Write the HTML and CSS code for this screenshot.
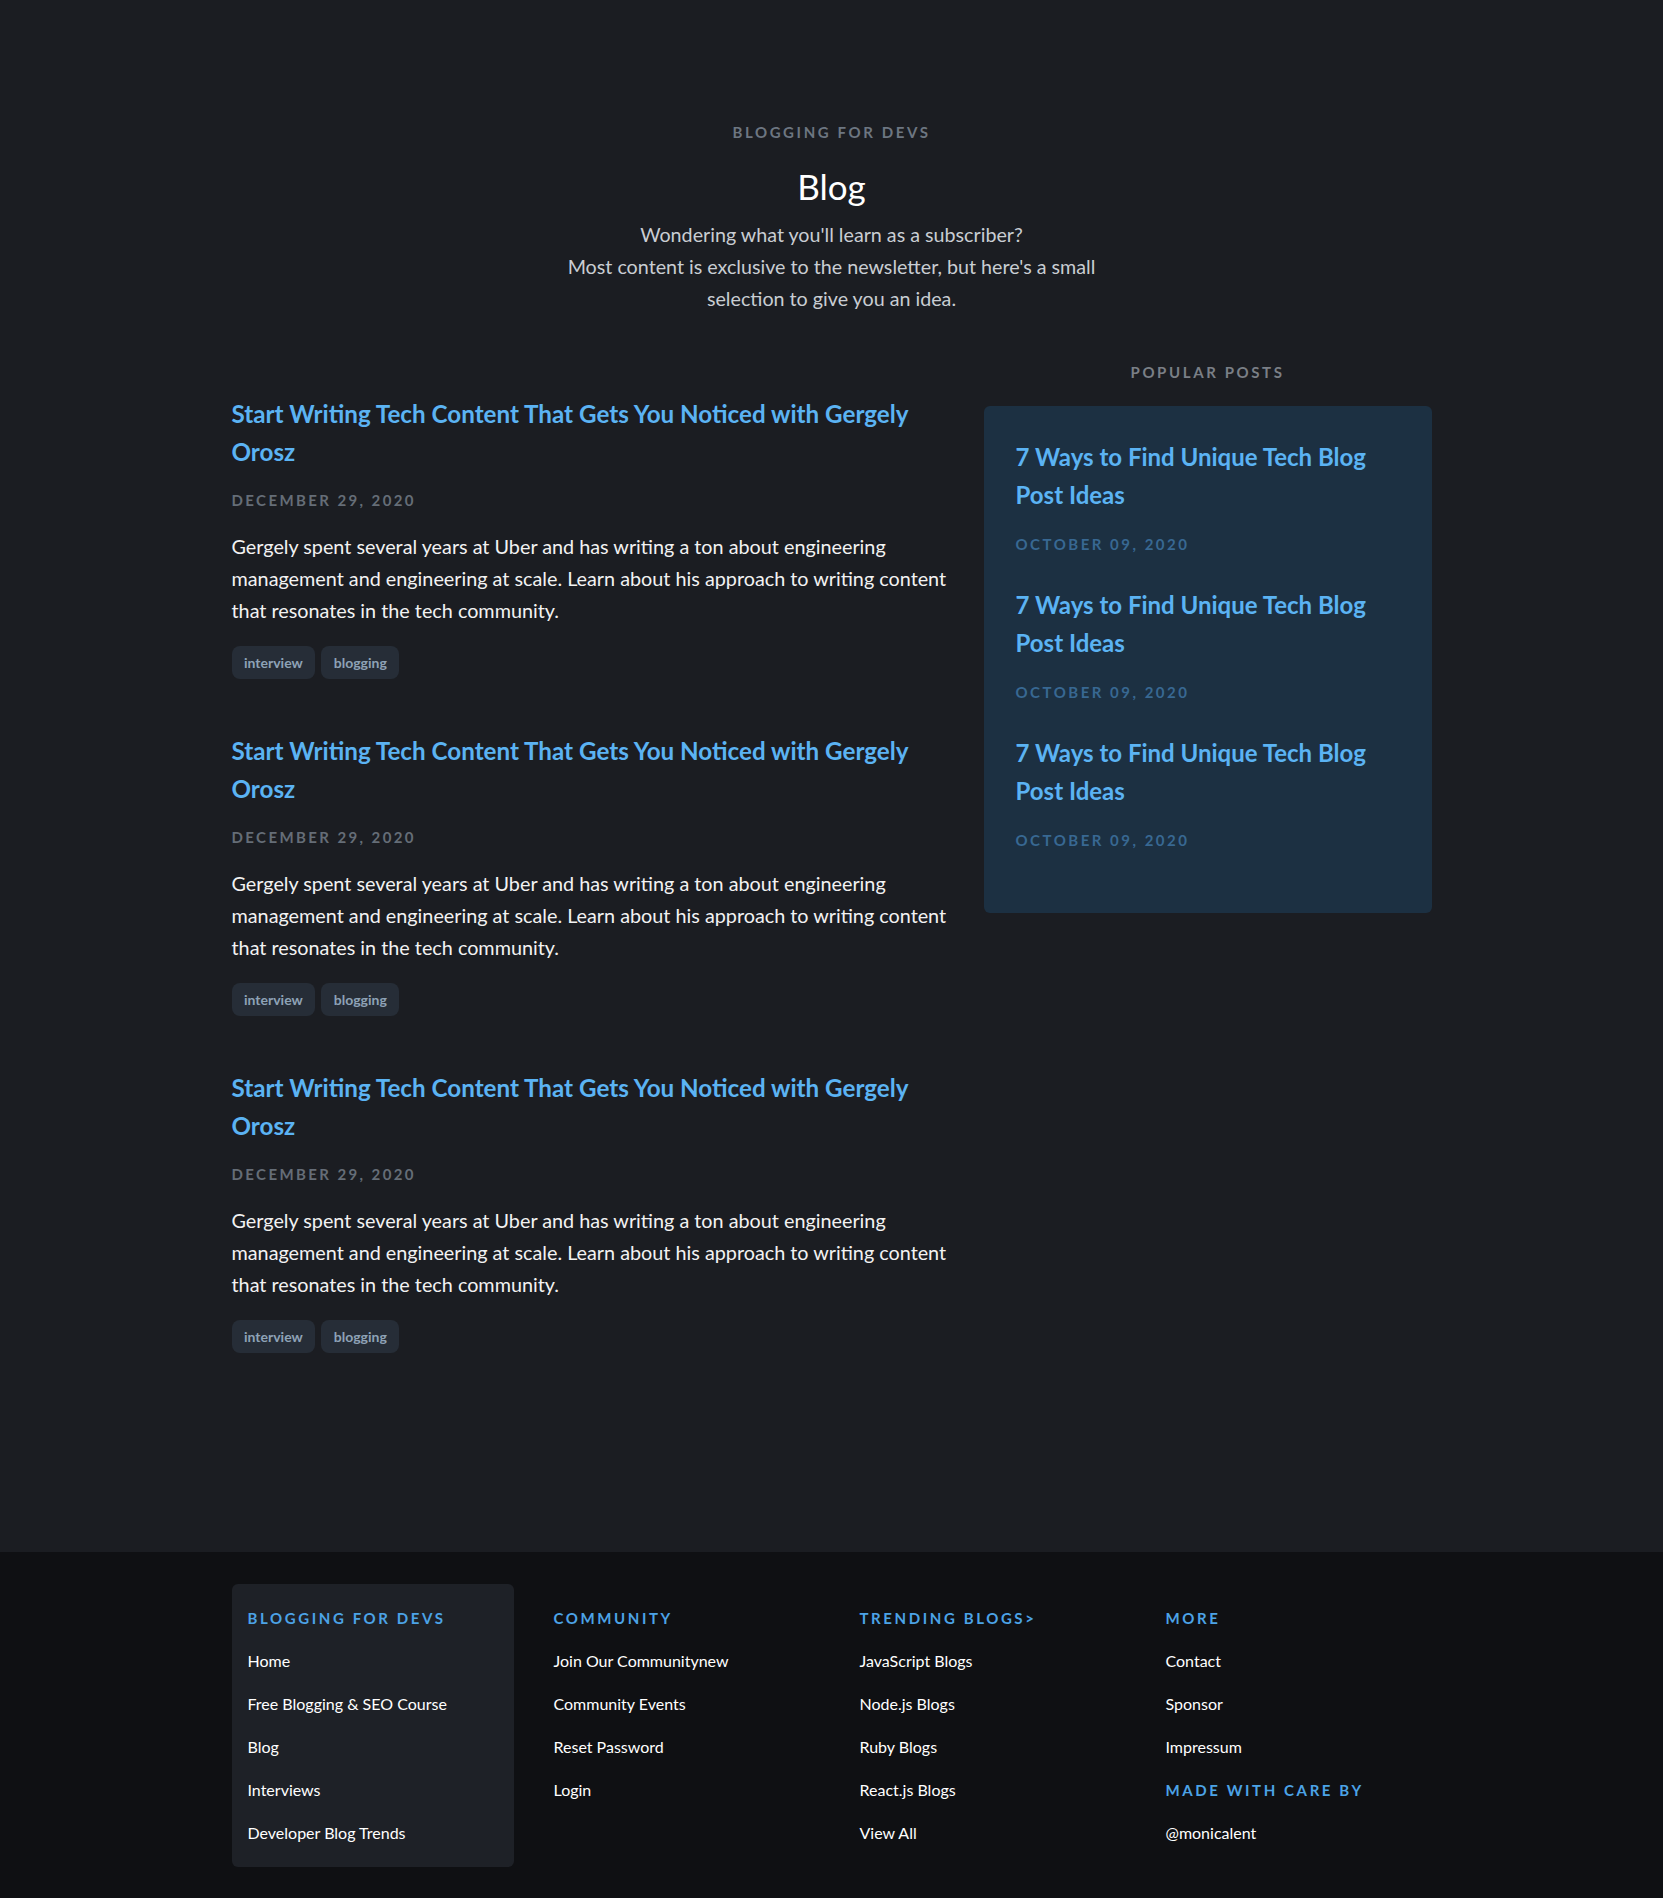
FILE: index.html
```html
<!DOCTYPE html>
<html lang="en">
<head>
<meta charset="utf-8">
<title>Blog | Blogging for Devs</title>
<link rel="stylesheet" href="styles.css">
</head>
<body>
<header class="hero">
  <div class="eyebrow">Blogging for Devs</div>
  <h1 class="hero-title">Blog</h1>
  <p class="hero-text">Wondering what you'll learn as a subscriber?<br>Most content is exclusive to the newsletter, but here's a small selection to give you an idea.</p>
</header>

<main class="layout">
  <section class="posts">
    <article class="post">
      <h2 class="post-title"><a href="#">Start Writing Tech Content That Gets You Noticed with Gergely Orosz</a></h2>
      <div class="post-date">December 29, 2020</div>
      <p class="post-excerpt">Gergely spent several years at Uber and has writing a ton about engineering management and engineering at scale. Learn about his approach to writing content that resonates in the tech community.</p>
      <div class="tags"><span class="tag">interview</span><span class="tag">blogging</span></div>
    </article>
    <article class="post">
      <h2 class="post-title"><a href="#">Start Writing Tech Content That Gets You Noticed with Gergely Orosz</a></h2>
      <div class="post-date">December 29, 2020</div>
      <p class="post-excerpt">Gergely spent several years at Uber and has writing a ton about engineering management and engineering at scale. Learn about his approach to writing content that resonates in the tech community.</p>
      <div class="tags"><span class="tag">interview</span><span class="tag">blogging</span></div>
    </article>
    <article class="post">
      <h2 class="post-title"><a href="#">Start Writing Tech Content That Gets You Noticed with Gergely Orosz</a></h2>
      <div class="post-date">December 29, 2020</div>
      <p class="post-excerpt">Gergely spent several years at Uber and has writing a ton about engineering management and engineering at scale. Learn about his approach to writing content that resonates in the tech community.</p>
      <div class="tags"><span class="tag">interview</span><span class="tag">blogging</span></div>
    </article>
  </section>

  <aside class="sidebar">
    <div class="sidebar-heading">Popular Posts</div>
    <div class="popular-card">
      <div class="popular-item">
        <a class="popular-title" href="#">7 Ways to Find Unique Tech Blog Post Ideas</a>
        <div class="popular-date">October 09, 2020</div>
      </div>
      <div class="popular-item">
        <a class="popular-title" href="#">7 Ways to Find Unique Tech Blog Post Ideas</a>
        <div class="popular-date">October 09, 2020</div>
      </div>
      <div class="popular-item">
        <a class="popular-title" href="#">7 Ways to Find Unique Tech Blog Post Ideas</a>
        <div class="popular-date">October 09, 2020</div>
      </div>
    </div>
  </aside>
</main>

<footer class="footer">
  <div class="footer-inner">
    <div class="footer-col footer-col-boxed">
      <div class="footer-heading">Blogging for Devs</div>
      <a class="footer-link" href="#">Home</a>
      <a class="footer-link" href="#">Free Blogging &amp; SEO Course</a>
      <a class="footer-link" href="#">Blog</a>
      <a class="footer-link" href="#">Interviews</a>
      <a class="footer-link" href="#">Developer Blog Trends</a>
    </div>
    <div class="footer-col">
      <div class="footer-heading">Community</div>
      <a class="footer-link" href="#">Join Our Communitynew</a>
      <a class="footer-link" href="#">Community Events</a>
      <a class="footer-link" href="#">Reset Password</a>
      <a class="footer-link" href="#">Login</a>
    </div>
    <div class="footer-col">
      <div class="footer-heading">Trending Blogs&gt;</div>
      <a class="footer-link" href="#">JavaScript Blogs</a>
      <a class="footer-link" href="#">Node.js Blogs</a>
      <a class="footer-link" href="#">Ruby Blogs</a>
      <a class="footer-link" href="#">React.js Blogs</a>
      <a class="footer-link" href="#">View All</a>
    </div>
    <div class="footer-col">
      <div class="footer-heading">More</div>
      <a class="footer-link" href="#">Contact</a>
      <a class="footer-link" href="#">Sponsor</a>
      <a class="footer-link" href="#">Impressum</a>
      <div class="footer-heading footer-heading-spaced">Made with care by</div>
      <a class="footer-link" href="#">@monicalent</a>
    </div>
  </div>
</footer>
</body>
</html>
```

FILE: styles.css
```css
* {
  box-sizing: border-box;
}

body {
  margin: 0;
  background: #1b1d22;
  color: #f0f0f0;
  font-family: Lato, "Open Sans", "Liberation Sans", sans-serif;
}

a {
  text-decoration: none;
}

/* Hero */
.hero {
  text-align: center;
  padding-top: 122px;
}

.eyebrow {
  font-size: 15px;
  line-height: 20px;
  font-weight: 700;
  letter-spacing: 2.6px;
  text-transform: uppercase;
  color: #6d7681;
}

.hero-title {
  margin: 20px 0 0;
  font-size: 35px;
  line-height: 48px;
  font-weight: 400;
  color: #ffffff;
}

.hero-text {
  margin: 9px auto 0;
  max-width: 560px;
  font-size: 19.7px;
  line-height: 32px;
  color: #c9cdd3;
}

/* Layout */
.layout {
  width: 1200px;
  margin: 47px auto 0;
  display: grid;
  grid-template-columns: 1fr 448px;
  column-gap: 32px;
  align-items: start;
  padding-bottom: 199px;
}

.posts {
  padding-top: 33px;
}

.post {
  margin-bottom: 53px;
}

.post:last-child {
  margin-bottom: 0;
}

.post-title {
  margin: 0;
  font-size: 24.2px;
  line-height: 37.5px;
  font-weight: 700;
}

.post-title a {
  color: #5bb3f3;
}

.post-date {
  margin-top: 20px;
  font-size: 15px;
  line-height: 20px;
  font-weight: 700;
  letter-spacing: 2.4px;
  text-transform: uppercase;
  color: #656d77;
}

.post-excerpt {
  margin: 20px 0 0;
  font-size: 19.8px;
  line-height: 32px;
  color: #f2f2f2;
}

.tags {
  margin-top: 20px;
  display: flex;
  gap: 6px;
}

.tag {
  display: inline-block;
  height: 33px;
  line-height: 33px;
  padding: 0 12.5px;
  border-radius: 8px;
  background: #262d37;
  color: #8ea2b6;
  font-size: 14px;
  font-weight: 700;
}

/* Sidebar */
.sidebar-heading {
  text-align: center;
  font-size: 15px;
  line-height: 20px;
  font-weight: 700;
  letter-spacing: 2.6px;
  text-transform: uppercase;
  color: #7a7f86;
  margin-bottom: 24px;
}

.popular-card {
  background: #1c3042;
  border-radius: 6px;
  padding: 32px 32px 31px;
}

.popular-item {
  margin-bottom: 32px;
}

.popular-title {
  display: block;
  font-size: 24px;
  line-height: 37.5px;
  font-weight: 700;
  color: #5bb3f3;
}

.popular-date {
  margin-top: 21px;
  font-size: 15px;
  line-height: 20px;
  font-weight: 700;
  letter-spacing: 2.5px;
  text-transform: uppercase;
  color: #386892;
}

/* Footer */
.footer {
  background: #0f1013;
  padding: 32px 0;
}

.footer-inner {
  width: 1200px;
  margin: 0 auto;
  display: grid;
  grid-template-columns: repeat(4, 1fr);
  column-gap: 24px;
  align-items: start;
}

.footer-col {
  display: flex;
  flex-direction: column;
  align-items: flex-start;
  padding: 24px 16px 24px;
}

.footer-col-boxed {
  background: #1e2127;
  border-radius: 6px;
}

.footer-heading {
  font-size: 15px;
  line-height: 20px;
  font-weight: 700;
  letter-spacing: 2.6px;
  text-transform: uppercase;
  color: #4ca3e6;
}

.footer-heading-spaced {
  margin-top: 23px;
}

.footer-link {
  margin-top: 23px;
  font-size: 16px;
  line-height: 20px;
  color: #ffffff;
}
```
